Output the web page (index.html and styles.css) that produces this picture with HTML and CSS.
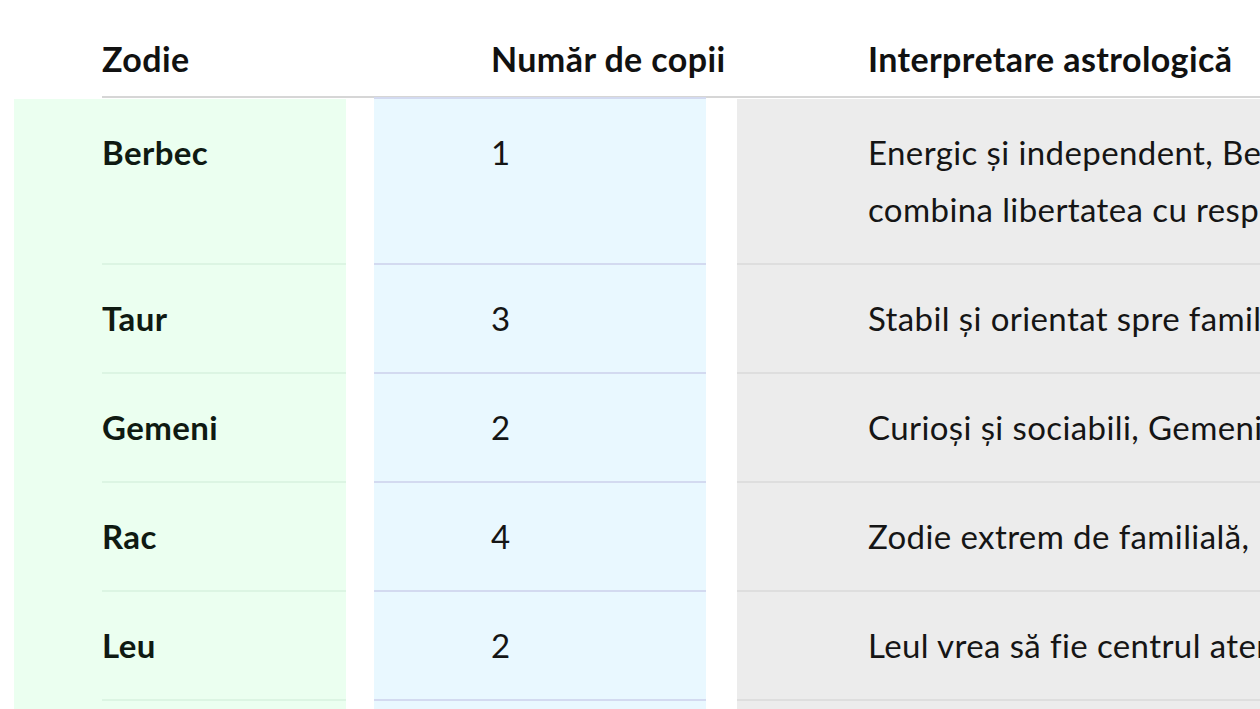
FILE: index.html
```html
<!DOCTYPE html>
<html lang="ro">
<head>
<meta charset="utf-8">
<title>Zodii și numărul de copii</title>
<link rel="stylesheet" href="styles.css">
</head>
<body>
<div class="page">
  <div class="thead">
    <div class="th th-1">Zodie</div>
    <div class="th th-2">Număr de copii</div>
    <div class="th th-3">Interpretare astrologică</div>
  </div>
  <div class="tbody">
    <div class="cell c1"><div class="in">Berbec</div></div>
    <div class="cell c2"><div class="in">1</div></div>
    <div class="cell c3"><div class="in">Energic și independent, Berbecul preferă un singur copil, cu care poate<br>combina libertatea cu responsabilitatea.</div></div>

    <div class="cell c1"><div class="in">Taur</div></div>
    <div class="cell c2"><div class="in">3</div></div>
    <div class="cell c3"><div class="in">Stabil și orientat spre familie, Taurul își dorește o casă plină.</div></div>

    <div class="cell c1"><div class="in">Gemeni</div></div>
    <div class="cell c2"><div class="in">2</div></div>
    <div class="cell c3"><div class="in">Curioși și sociabili, Gemenii iubesc agitația unei familii vii.</div></div>

    <div class="cell c1"><div class="in">Rac</div></div>
    <div class="cell c2"><div class="in">4</div></div>
    <div class="cell c3"><div class="in">Zodie extrem de familială, Racul visează la mulți copii.</div></div>

    <div class="cell c1"><div class="in">Leu</div></div>
    <div class="cell c2"><div class="in">2</div></div>
    <div class="cell c3"><div class="in">Leul vrea să fie centrul atenției, chiar și în familie.</div></div>

    <div class="cell c1"><div class="in">Fecioară</div></div>
    <div class="cell c2"><div class="in">2</div></div>
    <div class="cell c3"><div class="in">Organizată și atentă, Fecioara își planifică totul.</div></div>
  </div>
</div>
</body>
</html>
```
FILE: styles.css
```css
html, body {
  margin: 0;
  padding: 0;
  background: #ffffff;
  overflow: hidden;
}

body {
  font-family: "Lato", "Open Sans", sans-serif;
  font-size: 33px;
  letter-spacing: 0.4px;
  color: #151515;
}

.page {
  width: 1800px;
  padding-left: 14px;
}

.thead {
  display: grid;
  grid-template-columns: 244px 332px 1fr;
  column-gap: 28px;
  margin-left: 88px;
  padding-top: 31px;
  border-bottom: 2px solid #d6d6d6;
}

.th {
  font-size: 34px;
  font-weight: 700;
  line-height: 56px;
  padding-bottom: 9px;
  color: #111111;
  white-space: nowrap;
}

.th-2 { padding-left: 117px; }
.th-3 { padding-left: 134px; }

.tbody {
  display: grid;
  grid-template-columns: 332px 332px 1fr;
  column-gap: 28px;
  padding-top: 1px;
}

.cell {
  display: flex;
}

.in {
  flex: 1;
  padding: 25px 0;
  line-height: 57px;
  border-bottom: 2px solid transparent;
  white-space: nowrap;
}

.c1 {
  background: #ebfff0;
  padding-left: 88px;
  font-weight: 700;
  color: #0f1a12;
}
.c1 .in { border-bottom-color: #dcf5e3; }

.c2 {
  background: #e9f8ff;
  border-top: 2px solid #d3daf0;
  margin-top: -2px;
}
.c2 .in {
  padding-left: 117px;
  border-bottom-color: #dbeaf9;
}

.c3 {
  background: #ececec;
  margin-left: 3px;
}
.c3 .in {
  padding-left: 131px;
  border-bottom-color: #dedede;
}
```
